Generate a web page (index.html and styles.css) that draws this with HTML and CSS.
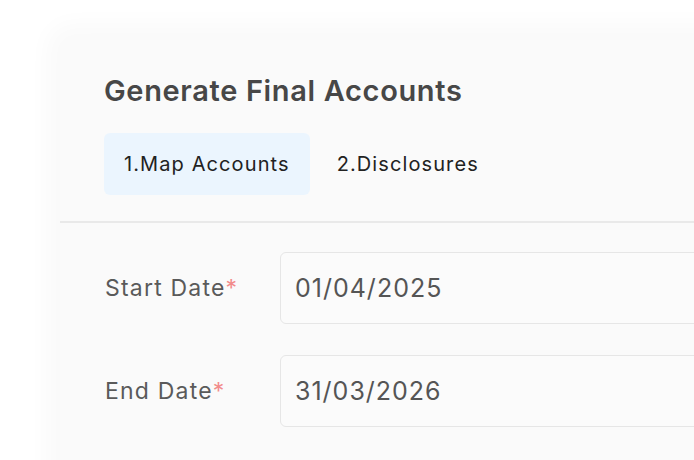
FILE: index.html
```html
<!DOCTYPE html>
<html>
<head>
<meta charset="utf-8">
<link rel="stylesheet" href="styles.css">
</head>
<body>
<div class="stage">
  <div class="card">
    <div class="header">
      <h1 class="title">Generate Final Accounts</h1>
      <div class="tabs">
        <div class="tab active">1.Map Accounts</div>
        <div class="tab">2.Disclosures</div>
      </div>
    </div>
    <div class="form">
      <div class="row">
        <label class="label">Start Date<span class="req">*</span></label>
        <div class="input">01/04/2025</div>
      </div>
      <div class="row">
        <label class="label">End Date<span class="req">*</span></label>
        <div class="input">31/03/2026</div>
      </div>
    </div>
  </div>
</div>
</body>
</html>
```

FILE: styles.css
```css
html, body {
  margin: 0;
  padding: 0;
  background: #ffffff;
  width: 694px;
  height: 460px;
  overflow: hidden;
}
.stage {
  width: 694px;
  height: 460px;
  overflow: hidden;
  box-sizing: border-box;
  padding: 37px 0 0 60px;
  font-family: Inter, "Open Sans", sans-serif;
}
.card {
  width: 680px;
  height: 460px;
  background: #fafafa;
  border-top-left-radius: 12px;
  box-shadow: 0 0 22px 14px rgba(0, 0, 0, 0.025);
}
.header {
  padding: 36px 0 26px 44px;
  border-bottom: 2px solid #e9e9e9;
}
.title {
  margin: 0;
  font-size: 29px;
  line-height: 36px;
  font-weight: 600;
  color: #474747;
  letter-spacing: 0.65px;
}
.tabs {
  display: flex;
  gap: 7px;
  margin-top: 24px;
}
.tab {
  height: 62px;
  display: flex;
  align-items: center;
  padding: 0 20px;
  font-size: 20px;
  letter-spacing: 1.1px;
  color: #222;
  border-radius: 6px;
}
.tab.active {
  background: #ebf5fe;
}
.form {
  padding: 29px 0 0 45px;
  display: flex;
  flex-direction: column;
  gap: 31px;
}
.row {
  display: flex;
  align-items: center;
}
.label {
  width: 175px;
  font-size: 23px;
  letter-spacing: 1.2px;
  color: #5a5a5a;
}
.req {
  color: #f28b8b;
}
.input {
  flex: 1;
  height: 72px;
  box-sizing: border-box;
  border: 1px solid #e6e6e6;
  border-radius: 6px;
  background: #fbfbfb;
  display: flex;
  align-items: center;
  padding-left: 14px;
  font-size: 25px;
  letter-spacing: 1px;
  color: #555;
}
```
